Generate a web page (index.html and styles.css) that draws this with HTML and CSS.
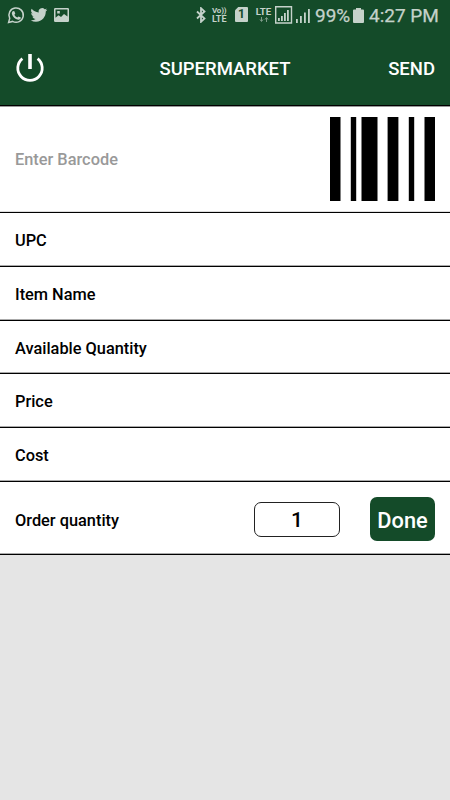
FILE: index.html
```html
<!DOCTYPE html>
<html lang="en">
<head>
<meta charset="utf-8">
<title>Supermarket</title>
<link rel="stylesheet" href="styles.css">
</head>
<body>
<div class="status">
  <svg class="status-icons" width="54" height="32" viewBox="0 0 54 32">
    <path d="M8.600 22.400l1.100-4A7.200 7.200 0 1 1 12.600 21.400z" fill="none" stroke="currentColor" stroke-width="1.500"/>
    <path d="M12.800 11.300l1.400-.3 1.100 2.500-.9 1.200c.7 1.300 1.600 2.200 3 2.800l1.100-1.100 2.400 1.200c-.1 1.600-1.300 2.300-2.700 2.100-3.300-.7-5.500-2.900-6.300-5.700-.2-1.100.2-2 .9-2.700z" fill="currentColor"/>
    <path transform="translate(30.700 6.300) scale(.7)" d="M23.600 4.900c-.9.400-1.800.6-2.800.8 1-.6 1.800-1.600 2.200-2.700-1 .6-2 1-3.100 1.200a4.900 4.900 0 0 0-8.400 4.500C7.400 8.500 3.800 6.600 1.400 3.600a4.900 4.900 0 0 0 1.500 6.600c-.8 0-1.600-.2-2.200-.6v.1c0 2.400 1.700 4.400 3.900 4.800-.7.200-1.500.2-2.200.1.600 2 2.400 3.400 4.600 3.400A9.900 9.900 0 0 1 0 20a14 14 0 0 0 7.500 2.200c9.100 0 14.300-7.700 14-14.600.8-.7 1.500-1.600 2.100-2.700z" fill="currentColor"/>
  </svg>
  <svg class="picture-icon" width="15" height="14" viewBox="0 0 15 14">
    <path fill="currentColor" fill-rule="evenodd" d="M1.200 0h12.600Q15 0 15 1.200v11.600q0 1.200-1.200 1.200H1.200Q0 14 0 12.800V1.200Q0 0 1.200 0zM1.500 1.500v8.300l3-2.500L7 9l3-3 3.500 2.500v-7zM3.200 3h2.600v2.600H3.200z"/>
  </svg>
  <div class="status-right">
    <svg class="bluetooth" width="10" height="16" viewBox="0 0 10 16"><path d="M1 4.500l7.500 7L5 14.800V1.200l3.500 3.300L1 11.500" fill="none" stroke="currentColor" stroke-width="1.800"/></svg>
    <div class="volte"><span class="vo">Vo))</span><span>LTE</span></div>
    <div class="sim">1</div>
    <div class="lte"><span>LTE</span>
      <svg width="10" height="5" viewBox="0 0 10 5"><path d="M2.500 0v4M1 2.500l1.500 2 1.500-2M7.500 5V1M6 2.500l1.500-2 1.500 2" fill="none" stroke="currentColor"/></svg>
    </div>
    <svg class="signals" width="38" height="20" viewBox="0 0 38 20">
      <path d="M.7.700h15.800v16.300H.7z" fill="none" stroke="currentColor" stroke-width="1.400"/>
      <path d="M3 12h1.800v3H3zM6 10h1.800v5H6zM9 7h1.800v8H9zM12 4h1.800v11H12zM21 13h1.800v4H21zM25 10h1.800v7H25zM29 6.500h1.800V17H29zM33 3h1.800v14H33z" fill="currentColor"/>
    </svg>
    <span class="percent">99%</span>
    <svg class="battery" width="11" height="15" viewBox="0 0 11 15"><path d="M3 0h5v1.500h2q1 0 1 1V14q0 1-1 1H1q-1 0-1-1V2.500q0-1 1-1h2z" fill="currentColor"/></svg>
    <span class="clock">4:27 PM</span>
  </div>
</div>
<header class="toolbar">
  <svg class="power" width="30" height="30" viewBox="0 0 30 30"><path d="M7.400 5.600a12.200 12.200 0 1 0 15.200 0" fill="none" stroke="#fff" stroke-width="2.800"/><path d="M15 1v15" stroke="#fff" stroke-width="3.600"/></svg>
  <h1>SUPERMARKET</h1>
  <span class="send">SEND</span>
</header>
<main>
  <div class="row scan">
    <span>Enter Barcode</span>
    <svg width="105" height="84" viewBox="0 0 105 84"><path d="M0 0h10.500v84H0zM20.800 0h5.400v84h-5.400zM31.500 0h16v84h-16zM57.600 0h10.800v84H57.600zM78.800 0h5.400v84h-5.400zM94.500 0H105v84H94.500z"/></svg>
  </div>
  <div class="row field">UPC</div>
  <div class="row field">Item Name</div>
  <div class="row field">Available Quantity</div>
  <div class="row field">Price</div>
  <div class="row field">Cost</div>
  <div class="row order">
    <span>Order quantity</span>
    <div class="quantity">1</div>
    <div class="done">Done</div>
  </div>
</main>
</body>
</html>
```
FILE: styles.css
```css
* { box-sizing: border-box; }
body {
  margin: 0;
  height: 800px;
  overflow: hidden;
  background: #e5e5e5;
  color: #000;
  font: 500 16.350px/20px Roboto, sans-serif;
}
svg { display: block; flex: none; }
.status {
  display: flex;
  height: 32px;
  background: #144b29;
  color: #c5d2ca;
}
.picture-icon { margin-top: 8px; }
.status-right {
  display: flex;
  flex: 1;
  align-items: flex-start;
  padding-left: 127px;
  white-space: nowrap;
}
.bluetooth { margin-top: 7px; }
.volte {
  display: flex;
  flex-direction: column;
  width: 24px;
  margin: 7px 0 0 6px;
  font-size: 9px;
  font-weight: 700;
  line-height: 8px;
}
.volte .vo { font-size: 8px; letter-spacing: -.2px; }
.sim {
  width: 13px;
  height: 15px;
  margin: 7px 0 0 -1px;
  border-radius: 1px;
  background: #c5d2ca;
  clip-path: polygon(25% 0, 100% 0, 100% 100%, 0 100%, 0 22%);
  color: #144b29;
  font: 700 12px/15px Roboto, sans-serif;
  text-align: center;
}
.lte {
  display: flex;
  flex-direction: column;
  align-items: center;
  width: 17px;
  margin: 7px 0 0 7px;
  font-size: 9.700px;
  font-weight: 700;
  line-height: 9px;
}
.lte svg { margin-top: 1px; opacity: .6; }
.signals { margin: 6px 0 0 3px; }
.percent, .clock {
  margin-top: 5px;
  font-size: 19px;
  font-weight: 400;
  line-height: 22px;
  -webkit-text-stroke: .25px currentColor;
}
.percent { width: 38px; margin-left: 2px; }
.battery { margin-top: 8px; }
.clock { margin-left: 5px; }
.toolbar {
  display: grid;
  grid-template-columns: 100px 1fr 100px;
  align-items: center;
  height: 74px;
  border-bottom: 1px solid #000;
  padding: 0 15px;
  background: #144b29;
  color: #fff;
}
.power { margin-top: -2px; }
.toolbar h1, .send {
  margin: 0;
  font: 500 18.500px/24px Roboto, sans-serif;
  text-align: center;
}
.send { text-align: right; }
.row {
  display: flex;
  align-items: center;
  padding: 2px 15px 0;
  background: #fff;
  border-bottom: 1px solid #000;
  box-shadow: inset 0 -1px #aaa;
}
.scan { height: 107px; justify-content: space-between; color: #999; box-shadow: inset 0 1px #999, inset 0 -1px #ddd; }
.scan svg { margin-top: -2px; }
.field { height: 54px; }
.field:nth-child(4) { height: 53px; padding-top: 3px; }
.order { height: 73px; padding-top: 4px; }
.order span { flex: 1; padding-top: 1px; }
.quantity {
  width: 86px;
  height: 35px;
  margin: -2px 30px 0 0;
  border: 1px solid #222;
  border-radius: 7px;
  font-size: 21px;
  line-height: 35px;
  text-align: center;
}
.done {
  width: 65px;
  height: 44px;
  margin-top: -3px;
  border-radius: 7px;
  background: #144b29;
  color: #fff;
  font-size: 21.800px;
  line-height: 47px;
  text-align: center;
}
```
